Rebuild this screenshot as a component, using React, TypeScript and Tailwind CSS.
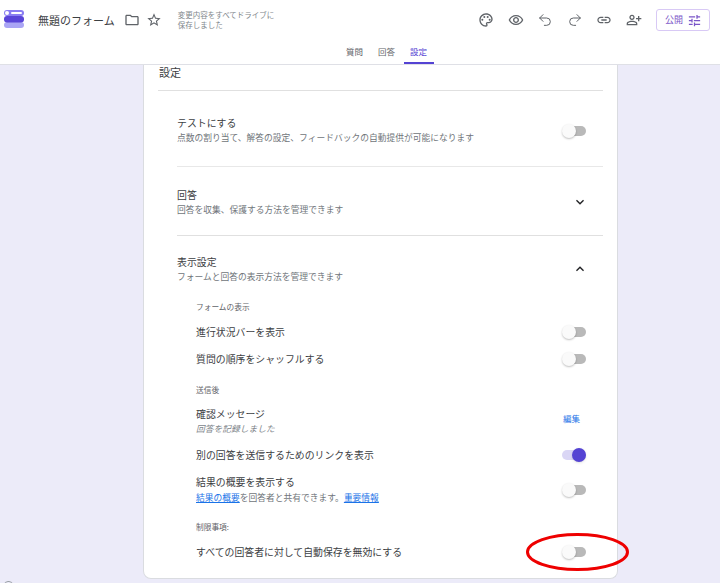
import type { ReactNode } from 'react';
import { Redo2, Undo2 } from 'lucide-react';
import {
    MdExpandLess,
    MdExpandMore,
    MdLink,
    MdOutlineFolder,
    MdOutlinePalette,
    MdOutlinePersonAddAlt,
    MdOutlineRemoveRedEye,
    MdOutlineStarBorder,
    MdOutlineTune,
} from 'react-icons/md';

const font = { fontFamily: '"Noto Sans CJK JP", "Noto Sans", sans-serif' };

function Logo() {
    return (
        <svg width="22" height="20" viewBox="0 1 22 20" className="shrink-0">
            <rect x="1" y="13" width="20" height="6" rx="3" fill="#aaa5f5" />
            <rect x="1" y="7" width="20" height="6.5" rx="3" fill="#5a45d8" />
            <rect x="1" y="1" width="20" height="6" rx="3" fill="#8a7df2" />
            <circle cx="4" cy="4" r="2" fill="#ffffff" />
            <rect x="8" y="3" width="11" height="2" rx="1" fill="#ffffff" />
        </svg>
    );
}

function Toggle({ on = false }: { on?: boolean }) {
    return (
        <div className="relative h-[14px] w-[24px] shrink-0">
            {on ? (
                <>
                    <div className="absolute right-0 top-[2px] h-[10px] w-[24px] rounded-full bg-[#dad6f5]" />
                    <div className="absolute right-0 top-0 h-[14px] w-[14px] rounded-full bg-[#5443d3] shadow-sm" />
                </>
            ) : (
                <>
                    <div className="absolute right-0 top-[2px] h-[10px] w-[21px] rounded-full bg-[#b9b9b9]" />
                    <div className="absolute left-0 top-0 h-[14px] w-[14px] rounded-full bg-[#fafafa] shadow-[0_1px_2px_rgba(0,0,0,0.25)]" />
                </>
            )}
        </div>
    );
}

function SubLabel({ children, className = '' }: { children: ReactNode; className?: string }) {
    return <div className={`flex h-4 items-center text-[7.7px] text-[#5f6368] ${className}`}>{children}</div>;
}

function Row({ label, children }: { label: ReactNode; children?: ReactNode }) {
    return (
        <div className="flex h-[27px] items-center justify-between">
            <div className="pt-[2px] text-[9.9px] leading-[15px] text-[#3c4043]">{label}</div>
            {children ?? <Toggle />}
        </div>
    );
}

function Section({ title, desc, children, className = '' }: { title: string; desc: string; children?: ReactNode; className?: string }) {
    return (
        <div className={`flex items-start justify-between ${className}`}>
            <div>
                <div className="pt-px text-[9.9px] leading-[15px] text-[#3c4043]">{title}</div>
                <div className="-mt-px text-[8.75px] leading-[15px] text-[#70757a]">{desc}</div>
            </div>
            {children}
        </div>
    );
}

export default function App() {
    return (
        <div className="relative h-[583px] w-[720px] overflow-hidden bg-[#ecebf9]" style={font}>
            <header className="h-[65px] border-b border-[#dfe0e6] bg-white">
                <div className="flex h-[40px] items-center pl-[3px] pr-[10px]">
                    <Logo />
                    <span className="ml-[13px] text-[11px] text-[#3c4043]">無題のフォーム</span>
                    <MdOutlineFolder className="ml-[9px] text-[16px] text-[#5f6368]" />
                    <MdOutlineStarBorder className="ml-[6px] text-[16px] text-[#5f6368]" />
                    <div className="ml-[16px] w-[104px] text-[7.5px] leading-[10px] text-[#80868b]">変更内容をすべてドライブに保存しました</div>
                    <div className="ml-auto flex items-center gap-[13.6px] text-[#5f6368]">
                        <MdOutlinePalette className="text-[16px]" />
                        <MdOutlineRemoveRedEye className="text-[16px]" />
                        <Undo2 size={16} strokeWidth={1.5} />
                        <Redo2 size={16} strokeWidth={1.5} />
                        <MdLink className="text-[16px]" />
                        <MdOutlinePersonAddAlt className="text-[16px]" />
                    </div>
                    <button className="ml-[14px] flex h-[22px] w-[54px] items-center gap-[4px] rounded-[3px] border border-[#d8c9f5] pl-[8px] text-[9px] text-[#7a55c8]">
                        公開
                        <MdOutlineTune className="text-[15px]" />
                    </button>
                </div>
                <nav className="flex h-[24px] justify-center pl-[53px] text-[8.5px] text-[#5f6368]">
                    <span className="flex h-[24px] w-[32px] items-center justify-center pb-[1px]">質問</span>
                    <span className="flex h-[24px] w-[32px] items-center justify-center pb-[1px]">回答</span>
                    <span className="mx-px flex h-[24px] w-[30px] items-center justify-center border-b-2 border-[#5443d3] text-[#5443d3]">設定</span>
                </nav>
            </header>

            <main className="ml-[143px] h-[514px] w-[475px] rounded-b-lg border border-t-0 border-[#dadce0] bg-white px-[14px]">
                <div className="flex h-[26px] items-start border-b border-[#e0e0e0] pl-px text-[11px] leading-[15px] text-[#3c4043]">設定</div>
                <div className="ml-[19px]">
                    <Section title="テストにする" desc="点数の割り当て、解答の設定、フィードバックの自動提供が可能になります" className="h-[76px] border-b border-[#e8e8e8] pt-[24px] pr-[17px]">
                        <div className="mt-[9px]">
                            <Toggle />
                        </div>
                    </Section>
                    <Section title="回答" desc="回答を収集、保護する方法を管理できます" className="h-[69px] border-b border-[#e0e0e0] pt-[20px] pr-[15px]">
                        <MdExpandMore className="mt-[7px] text-[16px] text-[#202124]" />
                    </Section>
                    <Section title="表示設定" desc="フォームと回答の表示方法を管理できます" className="h-[63px] pt-[18px] pr-[15px]">
                        <MdExpandLess className="mt-[7px] text-[16px] text-[#202124]" />
                    </Section>
                    <div className="pl-[19px] pr-[17px]">
                        <SubLabel>フォームの表示</SubLabel>
                        <div className="mt-[3px]">
                            <Row label="進行状況バーを表示" />
                            <Row label="質問の順序をシャッフルする" />
                        </div>
                        <SubLabel className="mt-[10px]">送信後</SubLabel>
                        <div className="mt-[6px] flex h-[34px] items-center justify-between">
                            <div>
                                <div className="pt-px text-[9.9px] leading-[15px] text-[#3c4043]">確認メッセージ</div>
                                <div className="text-[8.75px] italic leading-[14px] text-[#80868b]">回答を記録しました</div>
                            </div>
                            <a className="mb-[6px] mr-[6px] text-[8.5px] text-[#1a73e8]">編集</a>
                        </div>
                        <div className="mt-[3px]">
                            <Row label="別の回答を送信するためのリンクを表示">
                                <Toggle on />
                            </Row>
                        </div>
                        <div className="mt-[5px] flex h-[34px] items-center justify-between">
                            <div>
                                <div className="text-[9.9px] leading-[15px] text-[#3c4043]">結果の概要を表示する</div>
                                <div className="text-[8.75px] leading-[15px] text-[#70757a]">
                                    <a className="text-[#1a73e8] underline">結果の概要</a>を回答者と共有できます。<a className="text-[#1a73e8] underline">重要情報</a>
                                </div>
                            </div>
                            <Toggle />
                        </div>
                        <SubLabel className="mt-[12px]">制限事項:</SubLabel>
                        <div className="mt-[3px]">
                            <Row label="すべての回答者に対して自動保存を無効にする" />
                        </div>
                    </div>
                </div>
            </main>

            {/* red annotation drawn over the screenshot */}
            <svg width="108" height="44" viewBox="0 0 108 44" className="absolute left-[524px] top-[530px]">
                <ellipse cx="53.5" cy="22" rx="50" ry="17.5" fill="none" stroke="#ee0000" strokeWidth="3" />
            </svg>
            <div className="absolute left-[4px] top-[581px] h-[6px] w-[9px] rounded-t-sm border border-[#9aa0a6]" />
        </div>
    );
}
